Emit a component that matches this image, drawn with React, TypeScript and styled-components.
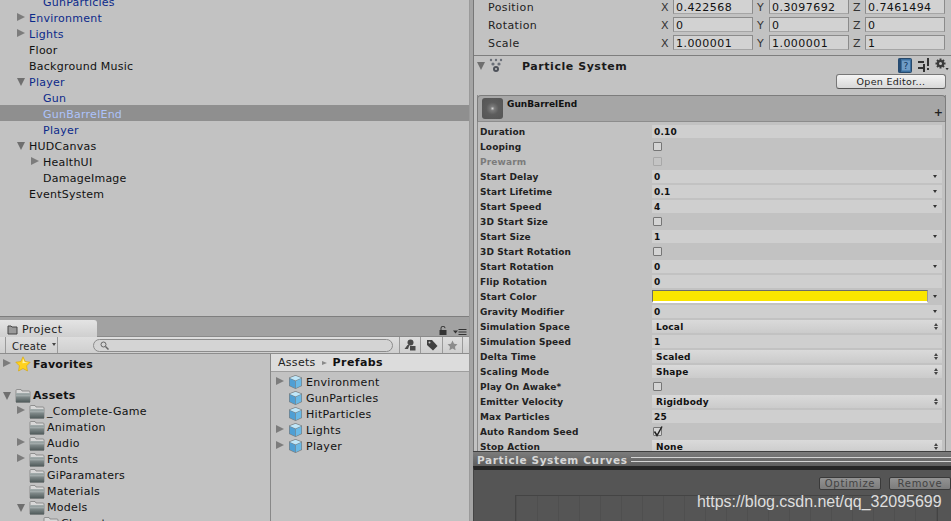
import React from "react";
import styled, { createGlobalStyle } from "styled-components";

const Global = createGlobalStyle`
  html, body { margin: 0; padding: 0; background: #c2c2c2; }
  * { box-sizing: border-box; }
`;

const Page = styled.div`
  position: relative;
  width: 951px;
  height: 521px;
  overflow: hidden;
  display: grid;
  grid-template-columns: 470px 481px;
  font-family: "DejaVu Sans", "Liberation Sans", sans-serif;
  font-size: 11px;
  color: #111;
  background: #c2c2c2;
`;

const LeftColumn = styled.div`
  display: flex;
  flex-direction: column;
  height: 521px;
  min-width: 0;
  border-right: 1px solid #9a9a9a;
`;

const Hierarchy = styled.div`
  height: 316px;
  overflow: hidden;
`;

const HierarchyList = styled.div`
  margin-top: -7px;
`;

const TreeRow = styled.div<{ $depth: number; $selected?: boolean; $prefab?: boolean }>`
  height: 16px;
  display: flex;
  align-items: center;
  padding-top: 2px;
  padding-left: ${(p) => 29 + p.$depth * 14}px;
  position: relative;
  letter-spacing: 0.25px;
  white-space: nowrap;
  background: ${(p) => (p.$selected ? "#8f8f8f" : "transparent")};
  color: ${(p) => (p.$selected ? "#adc3fb" : p.$prefab ? "#0c2a8a" : "#111")};
`;

const Arrow = styled.span<{ $open?: boolean; $left: number; $offset?: number }>`
  position: absolute;
  left: ${(p) => p.$left}px;
  top: ${(p) => (p.$open ? 5 : 3) + (p.$offset ?? 0)}px;
  width: 0;
  height: 0;
  ${(p) =>
    p.$open
      ? "border-left: 4.5px solid transparent; border-right: 4.5px solid transparent; border-top: 8px solid #6f6f6f;"
      : "border-top: 4.5px solid transparent; border-bottom: 4.5px solid transparent; border-left: 8px solid #7c7c7c;"}
`;

const TabStrip = styled.div`
  height: 21px;
  background: #a2a2a2;
  border-top: 1px solid #7e7e7e;
  padding-top: 3px;
  border-bottom: 1px solid #8a8a8a;
  display: flex;
  position: relative;
`;

const Tab = styled.div`
  width: 97px;
  height: 17px;
  background: linear-gradient(#e4e4e4, #cfcfcf);
  border-radius: 0 3px 0 0;
  display: flex;
  align-items: center;
  gap: 4px;
  padding: 2px 0 0 7px;
  letter-spacing: 0.4px;
  color: #222;
`;

const TabTools = styled.div`
  position: absolute;
  right: 2px;
  top: 9px;
  display: flex;
  align-items: flex-end;
  gap: 6px;
`;

const Toolbar = styled.div`
  height: 17px;
  background: linear-gradient(#dedede, #cfcfcf);
  border-bottom: 1px solid #8d8d8d;
  display: flex;
  align-items: stretch;
`;

const CreateButton = styled.div`
  margin-left: 5px;
  width: 53px;
  border-left: 1px solid #9a9a9a;
  border-right: 1px solid #9a9a9a;
  display: flex;
  align-items: center;
  padding: 2px 0 0 6px;
  gap: 5px;
  font-size: 10px;
  letter-spacing: 0.25px;
  color: #222;
`;

const Caret = styled.span`
  width: 0;
  height: 0;
  border-left: 2.5px solid transparent;
  border-right: 2.5px solid transparent;
  border-top: 3px solid #444;
  margin-top: -4px;
`;

const SearchBox = styled.div`
  margin: 2px 0 1px 35px;
  width: 300px;
  border: 1px solid #8c8c8c;
  border-radius: 7px;
  background: #d4d4d4;
  display: flex;
  align-items: center;
  padding-left: 6px;
`;

const ToolButton = styled.div<{ $first?: boolean }>`
  width: 21.4px;
  margin-left: ${(p) => (p.$first ? 6 : 0)}px;
  border-left: 1px solid #9a9a9a;
  display: flex;
  align-items: center;
  justify-content: center;
  &:last-child { border-right: 1px solid #9a9a9a; }
`;

const ProjectBody = styled.div`
  flex: 1;
  min-height: 0;
  display: grid;
  grid-template-columns: 271px 1fr;
  overflow: hidden;
`;

const FolderPane = styled.div`
  border-right: 1px solid #888;
  padding-top: 2px;
`;

const FolderRow = styled.div<{ $depth: number; $bold?: boolean; $gap?: number }>`
  height: 16px;
  display: flex;
  align-items: center;
  gap: 2px;
  position: relative;
  padding-left: ${(p) => 15 + p.$depth * 14}px;
  margin-top: ${(p) => p.$gap ?? 0}px;
  letter-spacing: 0.3px;
  white-space: nowrap;
  font-weight: ${(p) => (p.$bold ? 700 : 400)};
  color: #111;
`;

const ContentPane = styled.div`
  display: flex;
  flex-direction: column;
`;

const Breadcrumb = styled.div`
  height: 18px;
  background: #dcdcdc;
  border-bottom: 1px solid #9e9e9e;
  display: flex;
  align-items: center;
  padding-left: 7px;
  letter-spacing: 0.3px;
  gap: 6px;
  color: #222;
`;

const CrumbStrong = styled.b`
  color: #111;
  letter-spacing: 0.4px;
`;

const CrumbArrow = styled.span`
  width: 0;
  height: 0;
  border-top: 2.5px solid transparent;
  border-bottom: 2.5px solid transparent;
  border-left: 5px solid #8a8a8a;
`;

const AssetList = styled.div`
  padding-top: 2px;
`;

const AssetRow = styled.div`
  height: 16px;
  display: flex;
  align-items: center;
  padding-left: 17px;
  gap: 3px;
  position: relative;
  letter-spacing: 0.3px;
  color: #111;
`;

const RightColumn = styled.div`
  display: flex;
  flex-direction: column;
  height: 521px;
  min-width: 0;
  background: #a4a4a4;
  padding-left: 3px;
`;

const InspectorScroll = styled.div`
  height: 451px;
  overflow: hidden;
  background: #c2c2c2;
  border-left: 1px solid #777;
  flex-shrink: 0;
`;

const TransformList = styled.div`
  margin-top: -1px;
  padding-left: 14px;
  border-bottom: 1px solid #7e7e7e;
  padding-bottom: 2px;
`;

const TransformRow = styled.div`
  height: 18px;
  display: flex;
  align-items: flex-start;
  color: #222;
  letter-spacing: 0.4px;
`;

const TransformLabel = styled.div`
  width: 173px;
  line-height: 17px;
`;

const AxisLabel = styled.div<{ $gap: boolean }>`
  width: 12px;
  margin-left: ${(p) => (p.$gap ? 4 : 0)}px;
  line-height: 17px;
  font-size: 11px;
  color: #333;
`;

const AxisInput = styled.div`
  width: 80px;
  height: 15px;
  border: 1px solid #8b8b8b;
  border-bottom-color: #a5a5a5;
  background: #d2d2d2;
  padding-left: 2px;
  line-height: 15px;
  color: #111;
  letter-spacing: 0.45px;
`;

const ComponentHeader = styled.div`
  height: 39px;
  display: flex;
  flex-direction: column;
  position: relative;
`;

const HeaderTop = styled.div`
  height: 18px;
  display: flex;
  align-items: center;
  position: relative;
  padding-left: 15px;
`;

const ComponentTitle = styled.div`
  margin: 2px 0 0 19px;
  font-weight: 700;
  letter-spacing: 0.55px;
  color: #1a1a1a;
`;

const HeaderIcons = styled.div`
  margin-left: auto;
  display: flex;
  align-items: center;
  gap: 6px;
  padding-right: 2px;
`;

const OpenEditor = styled.div`
  align-self: flex-end;
  margin-right: 5px;
  width: 110px;
  height: 15px;
  border: 1px solid #777;
  border-bottom-color: #555;
  border-radius: 3px;
  background: linear-gradient(#f4f4f4, #d8d8d8);
  text-align: center;
  font-size: 9.5px;
  line-height: 14px;
  letter-spacing: 0.3px;
  color: #222;
`;

const ModuleBox = styled.div`
  margin-left: 3px;
  width: 469px;
  border-left: 1px solid #8a8a8a;
  border-right: 1px solid #8a8a8a;
`;

const ModuleHead = styled.div`
  height: 27px;
  margin: 0 -1px 2px;
  border: 1px solid #7c7c7c;
  border-bottom-color: #8c8c8c;
  border-radius: 4px 4px 0 0;
  background: #a6a6a6;
  display: flex;
  position: relative;
  padding: 2px 0 0 4px;
`;

const Thumb = styled.div`
  width: 21px;
  height: 21px;
  border-radius: 3px;
  background: radial-gradient(circle, #d0d0d0 0, #7a7a7a 14%, #5c5c5c 42%, #545454 100%);
`;

const ModuleName = styled.div`
  margin: 1px 0 0 4px;
  font-size: 9px;
  font-weight: 700;
  line-height: 11px;
  color: #111;
`;

const PlusMark = styled.div`
  position: absolute;
  right: 2px;
  bottom: 3px;
  font-size: 11px;
  font-weight: 700;
  line-height: 11px;
  color: #222;
`;

const ParamRow = styled.div`
  height: 15px;
  display: grid;
  grid-template-columns: 172px 290px;
  align-items: center;
  padding-left: 2px;
`;

const ParamLabel = styled.div<{ $muted?: boolean }>`
  font-size: 9px;
  font-weight: 700;
  letter-spacing: 0.12px;
  white-space: nowrap;
  color: ${(p) => (p.$muted ? "#7b7b7b" : "#222")};
`;

const ValueField = styled.div<{ $select?: boolean }>`
  height: 13px;
  background: ${(p) => (p.$select ? "linear-gradient(#dadada, #cbcbcb)" : "#cfcfcf")};
  padding-left: ${(p) => (p.$select ? 4 : 2)}px;
  display: flex;
  align-items: center;
  justify-content: space-between;
  font-size: 9px;
  font-weight: 700;
  letter-spacing: 0.2px;
  color: #111;
`;

const FieldArrow = styled.span<{ $after?: boolean }>`
  width: 0;
  height: 0;
  margin-left: ${(p) => (p.$after ? 5 : 0)}px;
  margin-right: 5px;
  border-left: 2.5px solid transparent;
  border-right: 2.5px solid transparent;
  border-top: 3px solid #333;
`;

const UpDown = styled.span`
  display: flex;
  flex-direction: column;
  gap: 1px;
  margin-right: 4px;
  &::before, &::after {
    content: "";
    width: 0;
    height: 0;
    border-left: 2.5px solid transparent;
    border-right: 2.5px solid transparent;
  }
  &::before { border-bottom: 3px solid #444; }
  &::after { border-top: 3px solid #444; }
`;

const CheckBox = styled.div<{ $muted?: boolean }>`
  width: 9px;
  height: 9px;
  margin-left: 1px;
  border: 1px solid ${(p) => (p.$muted ? "#a8a8a8" : "#767676")};
  border-radius: 1px;
  background: ${(p) => (p.$muted ? "#c4c4c4" : "#d4d4d4")};
  position: relative;
`;

const CheckMark = styled.svg`
  position: absolute;
  left: -1px;
  top: -3px;
`;

const ColorCell = styled.div`
  display: flex;
  align-items: center;
  height: 13px;
`;

const Swatch = styled.div`
  width: 276px;
  height: 13px;
  border: 1px solid #6c6c6c;
  border-bottom: 2px solid #fff;
  border-right-color: #9a9a9a;
  background: #fae600;
`;

const CurvesHeader = styled.div`
  height: 15px;
  flex-shrink: 0;
  background: linear-gradient(#7c7c7c, #5e5e5e);
  border-top: 1px solid #3f3f3f;
  display: flex;
  align-items: center;
  padding: 1px 0 0 4px;
  gap: 3px;
`;

const CurvesTitle = styled.div`
  font-size: 10.5px;
  font-weight: 700;
  letter-spacing: 0.62px;
  color: #d8d8d8;
  white-space: nowrap;
`;

const TitleRule = styled.div`
  flex: 1;
  height: 5px;
  border-top: 1px solid #d4d4d4;
  border-bottom: 1px solid #d4d4d4;
`;

const CurvesBody = styled.div`
  flex: 1;
  position: relative;
  background: #555;
  border-top: 4px solid #262626;
  border-left: 1px solid #444;
`;

const CurveButtons = styled.div`
  position: absolute;
  right: 0;
  top: 7px;
  display: flex;
  gap: 8px;
`;

const CurveButton = styled.div`
  width: 62px;
  height: 13px;
  border: 1px solid #3a3a3a;
  border-radius: 2px;
  background: linear-gradient(#939393, #7c7c7c);
  text-align: center;
  font-size: 10px;
  line-height: 11px;
  letter-spacing: 0.7px;
  color: #434343;
`;

const GraphBox = styled.div`
  position: absolute;
  left: 41px;
  top: 25px;
  width: 423px;
  height: 40px;
  border: 1px solid #444;
  background: repeating-linear-gradient(90deg, #4f4f4f 0 1px, #555 1px 21px);
`;

const Watermark = styled.div`
  position: absolute;
  left: 697px;
  top: 492px;
  font-family: "Liberation Sans", Arial, sans-serif;
  font-size: 16px;
  letter-spacing: -0.03px;
  line-height: 20px;
  color: rgba(255, 255, 255, 0.82);
  white-space: nowrap;
`;

const FolderIcon = ({ id }: { id: string }) => (
  <svg width="16" height="15" viewBox="0 0 16 15">
    <defs>
      <linearGradient id={id} x1="0" y1="0" x2="0" y2="1">
        <stop offset="0" stopColor="#a4aeae" />
        <stop offset="1" stopColor="#4d5858" />
      </linearGradient>
    </defs>
    <path d="M2 1.5h4l1 1.5h7a1 1 0 0 1 1 1V14H1V2.5a1 1 0 0 1 1-1z" fill="#d8d8d8" stroke="#777" strokeWidth="0.7" />
    <rect x="1" y="5" width="14" height="9.5" fill={`url(#${id})`} />
    <rect x="1" y="7.5" width="14" height="0.7" fill="#c8d0d0" opacity="0.7" />
  </svg>
);

const CubeIcon = () => (
  <svg width="15" height="16" viewBox="0 0 15 16">
    <path d="M7.5 1 14 3.5v8.5L7.5 15 1 12V3.5z" fill="#7a7f82" />
    <path d="M7.5 1.8 13.3 4 7.5 6.4 1.7 4z" fill="#bfe6f8" />
    <path d="M1.7 4.6 7.2 7v7.2l-5.5-2.6z" fill="#4f9fd4" />
    <path d="M13.3 4.6 7.8 7v7.2l5.5-2.6z" fill="#6ab9e6" />
  </svg>
);

const StarIcon = () => (
  <svg width="16" height="16" viewBox="0 0 16 16">
    <path d="M8 .8l2.2 4.7 5 .7-3.6 3.6.9 5.2L8 12.5 3.5 15l.9-5.2L.8 6.2l5-.7z" fill="#ffd21e" stroke="#d6a400" strokeWidth="0.6" />
    <path d="M8 2.5l1.6 3.6 3.8.5-6 .6z" fill="#fff3a6" />
  </svg>
);

const ParticleIcon = () => (
  <svg width="14" height="15" viewBox="0 0 14 15">
    <g fill="#6a6f78">
      <circle cx="2" cy="2" r="1.2" />
      <circle cx="7" cy="2" r="1.2" />
      <circle cx="12" cy="2" r="1.2" />
      <circle cx="4" cy="6" r="1.6" />
      <circle cx="10" cy="6" r="1.6" />
      <circle cx="7" cy="11" r="3" fill="#4d5159" />
    </g>
    <circle cx="7" cy="11" r="1" fill="#c4c4c4" />
  </svg>
);

const BookIcon = () => (
  <svg width="14" height="15" viewBox="0 0 14 15">
    <rect x="0.5" y="0.5" width="13" height="14" rx="1" fill="#3c6f9f" stroke="#27496b" />
    <rect x="0.5" y="0.5" width="2.5" height="14" fill="#274d75" />
    <rect x="4" y="2.5" width="8" height="10" fill="#6f9cc6" />
    <text x="8" y="11" fontSize="9" textAnchor="middle" fill="#12345a" fontFamily="DejaVu Sans">?</text>
  </svg>
);

const SlidersIcon = () => (
  <svg width="11" height="14" viewBox="0 0 11 14">
    <g fill="#333">
      <rect x="0" y="3" width="6" height="2" />
      <rect x="0" y="9" width="6" height="2" />
      <rect x="9" y="0" width="2" height="8" />
      <rect x="9" y="10" width="2" height="2" />
      <rect x="5" y="6" width="2" height="8" />
    </g>
  </svg>
);

const GearIcon = () => (
  <svg width="14" height="14" viewBox="0 0 14 14">
    <g stroke="#3a3a3a" strokeWidth="2">
      <path d="M5.5 0.5v10M.5 5.5h10M2 2l7 7M9 2l-7 7" />
    </g>
    <circle cx="5.5" cy="5.5" r="3.6" fill="#3a3a3a" />
    <circle cx="5.5" cy="5.5" r="1.5" fill="#c2c2c2" />
    <path d="M10.5 10h3.2l-1.6 2.2z" fill="#333" />
  </svg>
);

const TabFolder = () => (
  <svg width="11" height="10" viewBox="0 0 11 10">
    <path d="M1 1h3l1 1h5v7H1z" fill="#9a9a9a" stroke="#444" />
  </svg>
);

const SearchIcon = () => (
  <svg width="9" height="9" viewBox="0 0 9 9" fill="none" stroke="#666" strokeWidth="1">
    <circle cx="3.5" cy="3.5" r="2.5" />
    <path d="M5.5 5.5 8.5 8.5" strokeWidth="1.5" />
  </svg>
);

const PeopleIcon = () => (
  <svg width="12" height="12" viewBox="0 0 12 12" fill="#4a4a4a">
    <circle cx="6.5" cy="3.5" r="3" />
    <path d="M0.5 10l3-4h2l-1.5 4z" />
    <rect x="6" y="7" width="5.5" height="4.5" />
  </svg>
);

const TagIcon = () => (
  <svg width="12" height="12" viewBox="0 0 12 12">
    <path d="M1 1h5l5.5 6-4.5 4.5L1 6z" fill="#3f3f3f" />
    <circle cx="3.5" cy="3.5" r="1" fill="#c8c8c8" />
  </svg>
);

const GreyStar = () => (
  <svg width="11" height="11" viewBox="0 0 16 16">
    <path d="M8 .8l2.2 4.7 5 .7-3.6 3.6.9 5.2L8 12.5 3.5 15l.9-5.2L.8 6.2l5-.7z" fill="#8c8c8c" />
  </svg>
);

const LockIcon = () => (
  <svg width="8" height="9" viewBox="0 0 8 9">
    <rect x="0.5" y="4" width="7" height="5" fill="#333" />
    <path d="M2 4V2.2a2 2 0 0 1 4 0" fill="none" stroke="#333" />
  </svg>
);

const MenuIcon = () => (
  <svg width="14" height="6" viewBox="0 0 14 6">
    <path d="M0 1.5h5L2.5 4.5z" fill="#333" />
    <path d="M5.5 .5h8M5.5 3h8M5.5 5.5h8" stroke="#333" />
  </svg>
);

type Node = { name: string; depth: number; arrow?: "open" | "closed"; prefab?: boolean; selected?: boolean };

const hierarchy: Node[] = [
  { name: "GunParticles", depth: 1, prefab: true },
  { name: "Environment", depth: 0, arrow: "closed", prefab: true },
  { name: "Lights", depth: 0, arrow: "closed", prefab: true },
  { name: "Floor", depth: 0 },
  { name: "Background Music", depth: 0 },
  { name: "Player", depth: 0, arrow: "open", prefab: true },
  { name: "Gun", depth: 1, prefab: true },
  { name: "GunBarrelEnd", depth: 1, prefab: true, selected: true },
  { name: "Player", depth: 1, prefab: true },
  { name: "HUDCanvas", depth: 0, arrow: "open" },
  { name: "HealthUI", depth: 1, arrow: "closed" },
  { name: "DamageImage", depth: 1 },
  { name: "EventSystem", depth: 0 },
];

const folders: { name: string; depth: number; arrow?: "open" | "closed"; bold?: boolean; gap?: number; star?: boolean }[] = [
  { name: "Favorites", depth: 0, arrow: "closed", bold: true, star: true },
  { name: "Assets", depth: 0, arrow: "open", bold: true, gap: 15 },
  { name: "_Complete-Game", depth: 1, arrow: "closed" },
  { name: "Animation", depth: 1 },
  { name: "Audio", depth: 1, arrow: "closed" },
  { name: "Fonts", depth: 1, arrow: "closed" },
  { name: "GiParamaters", depth: 1 },
  { name: "Materials", depth: 1 },
  { name: "Models", depth: 1, arrow: "open" },
  { name: "Characters", depth: 2 },
];

const assets = [
  { name: "Environment", arrow: true },
  { name: "GunParticles" },
  { name: "HitParticles" },
  { name: "Lights", arrow: true },
  { name: "Player", arrow: true },
];

const transforms = [
  { label: "Position", values: ["0.422568", "0.3097692", "0.7461494"] },
  { label: "Rotation", values: ["0", "0", "0"] },
  { label: "Scale", values: ["1.000001", "1.000001", "1"] },
];

type Param = {
  label: string;
  kind: "number" | "curve" | "check" | "select" | "color";
  value?: string;
  checked?: boolean;
  muted?: boolean;
};

const params: Param[] = [
  { label: "Duration", kind: "number", value: "0.10" },
  { label: "Looping", kind: "check" },
  { label: "Prewarm", kind: "check", muted: true },
  { label: "Start Delay", kind: "curve", value: "0" },
  { label: "Start Lifetime", kind: "curve", value: "0.1" },
  { label: "Start Speed", kind: "curve", value: "4" },
  { label: "3D Start Size", kind: "check" },
  { label: "Start Size", kind: "curve", value: "1" },
  { label: "3D Start Rotation", kind: "check" },
  { label: "Start Rotation", kind: "curve", value: "0" },
  { label: "Flip Rotation", kind: "number", value: "0" },
  { label: "Start Color", kind: "color" },
  { label: "Gravity Modifier", kind: "curve", value: "0" },
  { label: "Simulation Space", kind: "select", value: "Local" },
  { label: "Simulation Speed", kind: "number", value: "1" },
  { label: "Delta Time", kind: "select", value: "Scaled" },
  { label: "Scaling Mode", kind: "select", value: "Shape" },
  { label: "Play On Awake*", kind: "check" },
  { label: "Emitter Velocity", kind: "select", value: "Rigidbody" },
  { label: "Max Particles", kind: "number", value: "25" },
  { label: "Auto Random Seed", kind: "check", checked: true },
  { label: "Stop Action", kind: "select", value: "None" },
];

const ParamValue = ({ param }: { param: Param }) => {
  switch (param.kind) {
    case "check":
      return (
        <CheckBox $muted={param.muted}>
          {param.checked && (
            <CheckMark width="11" height="12" viewBox="0 0 11 12" fill="none" stroke="#222" strokeWidth="1.5">
              <path d="M1.5 6.5 4 10.5 9 1.5" />
            </CheckMark>
          )}
        </CheckBox>
      );
    case "color":
      return (
        <ColorCell>
          <Swatch />
          <FieldArrow $after />
        </ColorCell>
      );
    case "curve":
      return (
        <ValueField>
          {param.value}
          <FieldArrow />
        </ValueField>
      );
    case "select":
      return (
        <ValueField $select>
          {param.value}
          <UpDown />
        </ValueField>
      );
    default:
      return <ValueField>{param.value}</ValueField>;
  }
};

export default function App() {
  return (
    <Page>
      <Global />
      <LeftColumn>
        <Hierarchy>
          <HierarchyList>
            {hierarchy.map((n, i) => (
              <TreeRow key={i} $depth={n.depth} $selected={n.selected} $prefab={n.prefab}>
                {n.arrow && <Arrow $open={n.arrow === "open"} $left={17 + n.depth * 14} $offset={n.arrow === "closed" ? 1 : 0} />}
                {n.name}
              </TreeRow>
            ))}
          </HierarchyList>
        </Hierarchy>
        <TabStrip>
          <Tab>
            <TabFolder />
            Project
          </Tab>
          <TabTools>
            <LockIcon />
            <MenuIcon />
          </TabTools>
        </TabStrip>
        <Toolbar>
          <CreateButton>
            Create
            <Caret />
          </CreateButton>
          <SearchBox>
            <SearchIcon />
          </SearchBox>
          <ToolButton $first>
            <PeopleIcon />
          </ToolButton>
          <ToolButton>
            <TagIcon />
          </ToolButton>
          <ToolButton>
            <GreyStar />
          </ToolButton>
        </Toolbar>
        <ProjectBody>
          <FolderPane>
            {folders.map((f) => (
              <FolderRow key={f.name} $depth={f.depth} $bold={f.bold} $gap={f.gap}>
                {f.arrow && <Arrow $open={f.arrow === "open"} $left={3 + f.depth * 14} />}
                {f.star ? <StarIcon /> : <FolderIcon id={`folder-${f.name}`} />}
                {f.name}
              </FolderRow>
            ))}
          </FolderPane>
          <ContentPane>
            <Breadcrumb>
              Assets
              <CrumbArrow />
              <CrumbStrong>Prefabs</CrumbStrong>
            </Breadcrumb>
            <AssetList>
              {assets.map((a) => (
                <AssetRow key={a.name}>
                  {a.arrow && <Arrow $left={5} />}
                  <CubeIcon />
                  {a.name}
                </AssetRow>
              ))}
            </AssetList>
          </ContentPane>
        </ProjectBody>
      </LeftColumn>
      <RightColumn>
        <InspectorScroll>
          <TransformList>
            {transforms.map((t) => (
              <TransformRow key={t.label}>
                <TransformLabel>{t.label}</TransformLabel>
                {["X", "Y", "Z"].map((axis, i) => (
                  <React.Fragment key={axis}>
                    <AxisLabel $gap={i > 0}>{axis}</AxisLabel>
                    <AxisInput>{t.values[i]}</AxisInput>
                  </React.Fragment>
                ))}
              </TransformRow>
            ))}
          </TransformList>
          <ComponentHeader>
            <HeaderTop>
              <Arrow $open $left={3} $offset={1} />
              <ParticleIcon />
              <ComponentTitle>Particle System</ComponentTitle>
              <HeaderIcons>
                <BookIcon />
                <SlidersIcon />
                <GearIcon />
              </HeaderIcons>
            </HeaderTop>
            <OpenEditor>Open Editor...</OpenEditor>
          </ComponentHeader>
          <ModuleBox>
            <ModuleHead>
              <Thumb />
              <ModuleName>GunBarrelEnd</ModuleName>
              <PlusMark>+</PlusMark>
            </ModuleHead>
            {params.map((p) => (
              <ParamRow key={p.label}>
                <ParamLabel $muted={p.muted}>{p.label}</ParamLabel>
                <ParamValue param={p} />
              </ParamRow>
            ))}
          </ModuleBox>
        </InspectorScroll>
        <CurvesHeader>
          <CurvesTitle>Particle System Curves</CurvesTitle>
          <TitleRule />
        </CurvesHeader>
        <CurvesBody>
          <GraphBox />
          <CurveButtons>
            <CurveButton>Optimize</CurveButton>
            <CurveButton>Remove</CurveButton>
          </CurveButtons>
        </CurvesBody>
      </RightColumn>
      <Watermark>https://blog.csdn.net/qq_32095699</Watermark>
    </Page>
  );
}
